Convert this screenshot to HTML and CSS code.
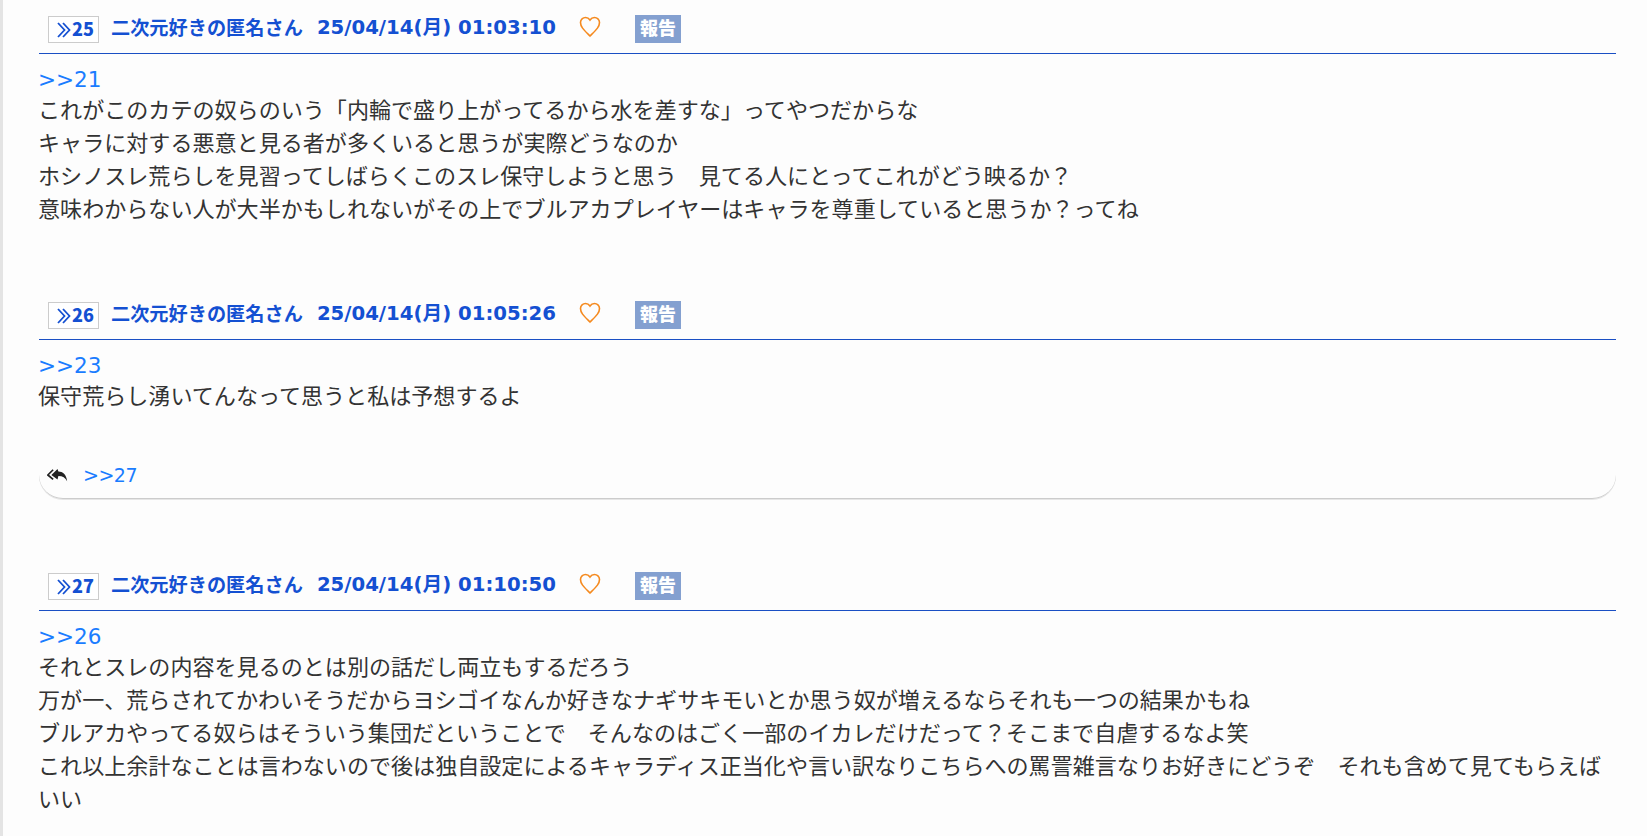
FILE: index.html
```html
<!DOCTYPE html>
<html lang="ja">
<head>
  <meta charset="UTF-8" />
  <title>スレッド</title>
  <link rel="stylesheet" href="styles.css">
</head>
<body>
  <div class="thread">
    <div class="post">
      <div class="post-head">
        <span class="num"><svg class="num-mark" viewBox="0 0 14 16"><path d="M1 1 L7.500 8 L1 15 M6 1 L12.500 8 L6 15"/></svg>25</span>
        <span class="name">二次元好きの匿名さん</span>
        <span class="date">25/04/14(月) 01:03:10</span>
        <svg class="heart" viewBox="0 0 24 24"><path d="M12 21 C6 15 2.500 12 2.500 7.500 C2.500 4.500 5 2.500 7.500 2.500 C9.500 2.500 11 3.500 12 5 C13 3.500 14.500 2.500 16.500 2.500 C19 2.500 21.500 4.500 21.500 7.500 C21.500 12 18 15 12 21 Z"/></svg>
        <span class="report">報告</span>
      </div>
      <div class="post-body">
        <a class="anchor">&gt;&gt;21</a>
        これがこのカテの奴らのいう「内輪で盛り上がってるから水を差すな」ってやつだからな<br>
        キャラに対する悪意と見る者が多くいると思うが実際どうなのか<br>
        ホシノスレ荒らしを見習ってしばらくこのスレ保守しようと思う　見てる人にとってこれがどう映るか？<br>
        意味わからない人が大半かもしれないがその上でブルアカプレイヤーはキャラを尊重していると思うか？ってね
      </div>
    </div>

    <div class="post">
      <div class="post-head">
        <span class="num"><svg class="num-mark" viewBox="0 0 14 16"><path d="M1 1 L7.500 8 L1 15 M6 1 L12.500 8 L6 15"/></svg>26</span>
        <span class="name">二次元好きの匿名さん</span>
        <span class="date">25/04/14(月) 01:05:26</span>
        <svg class="heart" viewBox="0 0 24 24"><path d="M12 21 C6 15 2.500 12 2.500 7.500 C2.500 4.500 5 2.500 7.500 2.500 C9.500 2.500 11 3.500 12 5 C13 3.500 14.500 2.500 16.500 2.500 C19 2.500 21.500 4.500 21.500 7.500 C21.500 12 18 15 12 21 Z"/></svg>
        <span class="report">報告</span>
      </div>
      <div class="post-body">
        <a class="anchor">&gt;&gt;23</a>
        保守荒らし湧いてんなって思うと私は予想するよ
      </div>
      <div class="replies">
        <svg class="reply-icon" viewBox="0 0 24 16"><path class="reply-back" d="M7 2 L1 8 L7 13"/><path d="M12 1 L5 8 L12 13 L13 9 C18 9 21 11 23 15 C22 7 18 4 13 4 Z"/></svg>
        <a class="reply-link">&gt;&gt;27</a>
      </div>
    </div>

    <div class="post">
      <div class="post-head">
        <span class="num"><svg class="num-mark" viewBox="0 0 14 16"><path d="M1 1 L7.500 8 L1 15 M6 1 L12.500 8 L6 15"/></svg>27</span>
        <span class="name">二次元好きの匿名さん</span>
        <span class="date">25/04/14(月) 01:10:50</span>
        <svg class="heart" viewBox="0 0 24 24"><path d="M12 21 C6 15 2.500 12 2.500 7.500 C2.500 4.500 5 2.500 7.500 2.500 C9.500 2.500 11 3.500 12 5 C13 3.500 14.500 2.500 16.500 2.500 C19 2.500 21.500 4.500 21.500 7.500 C21.500 12 18 15 12 21 Z"/></svg>
        <span class="report">報告</span>
      </div>
      <div class="post-body">
        <a class="anchor">&gt;&gt;26</a>
        それとスレの内容を見るのとは別の話だし両立もするだろう<br>
        万が一、荒らされてかわいそうだからヨシゴイなんか好きなナギサキモいとか思う奴が増えるならそれも一つの結果かもね<br>
        ブルアカやってる奴らはそういう集団だということで　そんなのはごく一部のイカレだけだって？そこまで自虐するなよ笑<br>
        これ以上余計なことは言わないので後は独自設定によるキャラディス正当化や言い訳なりこちらへの罵詈雑言なりお好きにどうぞ　それも含めて見てもらえばいい
      </div>
    </div>
  </div>
</body>
</html>
```

FILE: styles.css
```css
html, body {
  height: 100%;
}
body {
  margin: 0;
  background: #fdfdfd;
  color: #333;
  font-family: "DejaVu Sans", "Noto Sans CJK JP", sans-serif;
  overflow: hidden;
}
.thread {
  height: 100%;
  padding: 15px 31px 0 36px;
  border-left: 3px solid #e4e4e4;
  box-sizing: border-box;
}
.post {
  margin-bottom: 77px;
}
.post-head {
  display: flex;
  align-items: flex-start;
  height: 38px;
  border-bottom: 1px solid #1a4fc4;
  color: #1450d2;
  font-size: 19px;
  font-weight: bold;
}
.num {
  box-sizing: border-box;
  display: flex;
  align-items: center;
  justify-content: flex-end;
  width: 51px;
  height: 27px;
  margin: 1px 0 0 9px;
  border: 1px solid #ccc;
  background: #fff;
  font-family: "Noto Sans CJK JP", sans-serif;
  font-size: 18px;
  font-weight: 900;
  padding: 0 4px 4px 0;
}
.num-mark {
  flex-shrink: 0;
  width: 14px;
  height: 16px;
  margin: 4px 1px 0 0;
  fill: none;
  stroke: #1450d2;
  stroke-width: 1.800;
}
.name {
  margin-left: 12px;
  line-height: 25px;
  font-family: "Noto Sans CJK JP", sans-serif;
  font-size: 19.200px;
}
.date {
  margin-left: 14px;
  line-height: 25px;
  font-size: 19.700px;
}
.heart {
  width: 24px;
  height: 24px;
  margin-left: 22px;
  fill: none;
  stroke: #f58a1f;
  stroke-width: 1.6;
}
.report {
  width: 46px;
  height: 28px;
  margin-left: 33px;
  background: #84a0d0;
  color: #fff;
  font-size: 18px;
  font-weight: 900;
  line-height: 25px;
  text-align: center;
  font-family: "Noto Sans CJK JP", sans-serif;
}
.post-body {
  padding-top: 5px;
  margin-left: -1px;
  font-size: 22.070px;
  line-height: 33px;
  font-family: "Noto Sans CJK JP", sans-serif;
  font-weight: 400;
}
.anchor, .reply-link {
  color: #1a7cff;
  font-family: "DejaVu Sans", sans-serif;
  font-weight: normal;
}
.anchor {
  display: block;
  height: 29px;
  padding-top: 4px;
  font-size: 21.500px;
}
.replies {
  display: flex;
  align-items: center;
  box-sizing: border-box;
  height: 46px;
  margin-top: 42px;
  margin-bottom: -4px;
  padding: 0 0 2px 8px;
  border-bottom: 1px solid #ccc;
  border-radius: 0 0 24px 24px;
  box-shadow: 0 1px 0 #e6e6e6;
  font-size: 19px;
}
.reply-icon {
  width: 21px;
  height: 14px;
  fill: #222;
}
.reply-back {
  fill: none;
  stroke: #222;
  stroke-width: 2;
}
.reply-link {
  margin-left: 15px;
  letter-spacing: -0.5px;
}
```
